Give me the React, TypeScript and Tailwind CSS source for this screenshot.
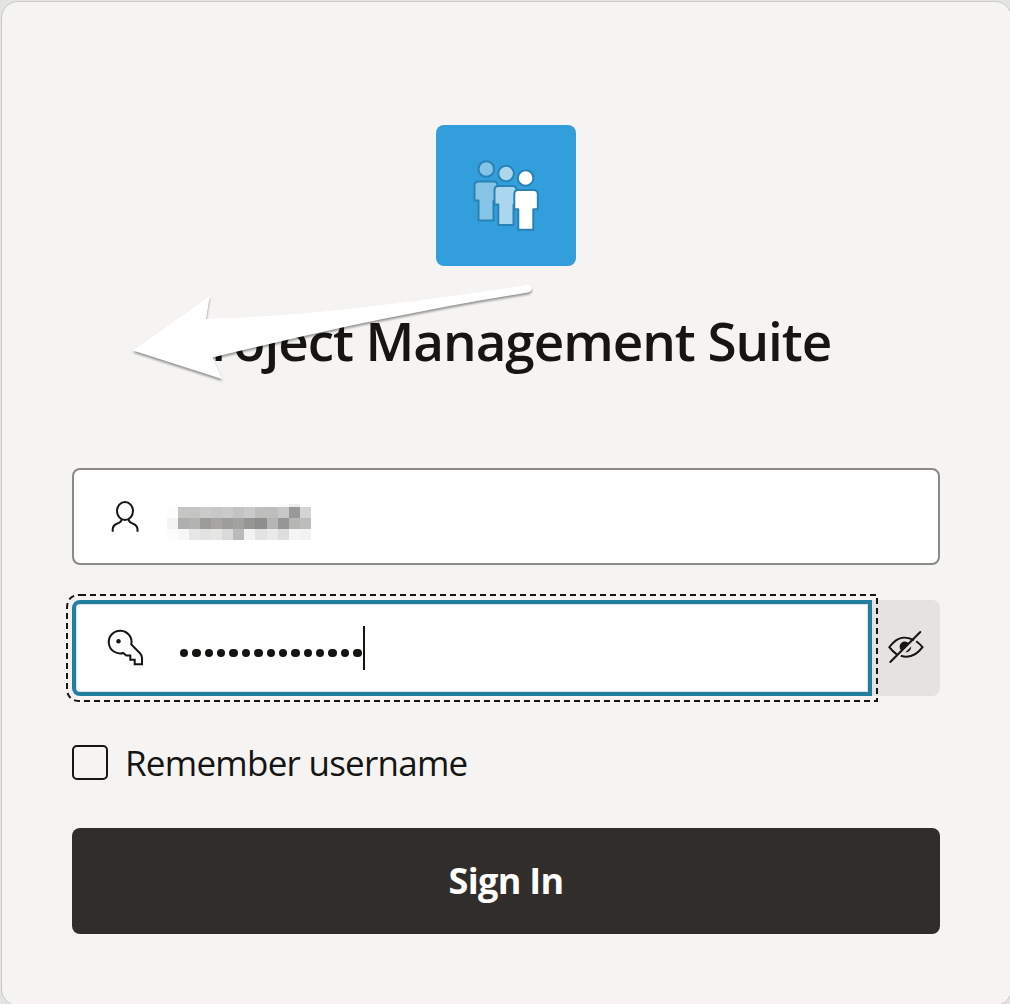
import React from "react";

const mosaic: string[][] = [
  ["#fdfdfd", "#c5c5c3", "#c4c4c2", "#cbcbc9", "#c7c7c7", "#cacac8", "#c3c3c3", "#cacaca", "#bebebc", "#bdbdbb", "#c8c8c8", "#999997", "#d4d4d4"],
  ["#f3f3f3", "#aeaeae", "#b3b3b1", "#9c9b99", "#a6a5a3", "#9f9d9c", "#a2a2a0", "#969694", "#8e8e8e", "#b5b5b5", "#969694", "#b6b6b4", "#bdbdbb"],
  ["#fcfcfc", "#f7f7f7", "#e6e6e6", "#e3e3e1", "#e6e6e4", "#dadad8", "#bababa", "#f2f2f2", "#e3e3e3", "#eaeaea", "#dddddd", "#f5f5f5", "#f3f3f3"],
];

function PeopleLogo() {
  return (
    <svg viewBox="430 120 150 150" className="ml-[-6px] mt-[-5px] h-[150px] w-[150px] shrink-0" stroke="#2782b5" strokeWidth="2" strokeLinejoin="round">
      <g fill="#85c3e7">
        <circle cx="486.3" cy="169" r="7.8" />
        <path d="M478.500 181.500h15q4 0 4 4v15.500h-4v19.500h-15v-20h-4V185.500q0-4 4-4Z" />
      </g>
      <g fill="#abd7ee">
        <circle cx="506.1" cy="173.500" r="7.800" />
        <path d="M498.500 186h14q4 0 4 4v15h-3v20h-15.200v-20.500h-3.800V190q0-4 4-4Z" />
      </g>
      <g fill="#fff">
        <circle cx="525.6" cy="178" r="7.800" />
        <path d="M518.300 190h15.200q4.300 0 4.300 4.300v15h-4.500v20.500h-15v-20.500h-4v-15q0-4.300 4-4.300Z" />
      </g>
    </svg>
  );
}

function PersonIcon() {
  return (
    <svg viewBox="109 499 32 34" className="mb-[2px] h-[34px] w-8" fill="none" stroke="#161513" strokeWidth="2">
      <ellipse cx="125" cy="511" rx="8" ry="9" />
      <path d="M121.700 519c0 3-2 3.700-4.700 4.700-3.200 1.200-4.300 2.800-4.300 5.800v2.200M128.500 519c0 3 2 3.700 4.600 4.700 3.200 1.200 4.400 2.800 4.400 5.800v2.200" />
    </svg>
  );
}

function KeyIcon() {
  return (
    <svg viewBox="106 628 40 40" className="h-10 w-10" fill="none" stroke="#161513" strokeWidth="2">
      <path d="M131.300 644.500A11.400 11.400 0 1 0 123.300 653l3 2.600h4v4.200h4.400v4.500h7.300v-6q0-3-2-5Z" />
      <circle cx="118.500" cy="641.2" r="2.200" fill="#161513" stroke="none" />
    </svg>
  );
}

function HiddenEyeIcon() {
  return (
    <svg viewBox="886 629 40 36" className="mb-[2px] h-9 w-10" fill="none" stroke="#161513" strokeWidth="2">
      <path d="M914 640.200c-7-4-14.600-3.200-20.200 2-1.800 1.700-3.300 3.200-4.500 5 2.300 3 4.700 5.300 7.500 7.200M916.200 641.200c2.300 1.600 4.400 3.500 6.300 6-6 8.200-13.500 11.200-21.700 8.600" />
      <path d="M901.100 650.300a5 5 0 0 1 7.500-7.300Z" fill="#161513" stroke="none" />
      <path d="M911.200 646.400q-.2 5.300-6 6.200Z" fill="#161513" stroke="none" />
      <path d="M890.300 662 920.300 632" strokeLinecap="round" />
    </svg>
  );
}

function Arrow() {
  return (
    <svg viewBox="120 275 430 120" className="pointer-events-none absolute left-[120px] top-[275px] h-[120px] w-[430px] drop-shadow-[0_2px_1px_rgba(0,0,0,0.4)]">
      <path d="M133 350.500 209.800 296l-3.800 23C315 316 424 300 527 285c6-1 7 6 1 7.500C424 309 312 333 212.500 357.500L222 379Z" fill="#fff" />
    </svg>
  );
}

export default function App() {
  return (
    <div className="relative h-[1004px] w-[1010px] overflow-hidden bg-[#e4e4e3] pl-px pt-px font-['Open_Sans',sans-serif] text-[#161513]">
      <main className="flex h-[1005px] w-[1011px] flex-col rounded-[17px] border border-[#c9c9c7] bg-[#f5f4f2] px-[70px] pt-[123px]">
        <div className="ml-[364px] flex h-[141px] w-[140px] overflow-hidden rounded-[8px] bg-[#329fdc]">
          <PeopleLogo />
        </div>
        <h1 className="mt-[39px] flex h-[72px] w-[868px] items-center justify-center whitespace-nowrap pr-px text-[53px] font-semibold tracking-[-1.050px]">
          Project Management Suite
        </h1>

        <div className="mt-[91px] flex h-[97px] w-[868px] items-center rounded-[8px] border-2 border-[#8b8a87] bg-white pl-[35px]">
          <PersonIcon />
          <div className="relative ml-[25.700px] mt-[14px] grid grid-cols-[repeat(13,11.1px)] grid-rows-[11px_11px_11px]">
            {mosaic.flat().map((color, i) => (
              <span key={i} style={{ backgroundColor: color }} />
            ))}
            <span className="absolute left-[111px] top-[-3px] h-[3px] w-[11px] bg-[#fafafa]" />
            <span className="absolute left-[122px] top-[-3px] h-[3px] w-[11px] bg-[#eeeeee]" />
          </div>
        </div>

        <div className="mt-[35px] flex h-24 w-[868px]">
          <div className="relative flex w-[800px] items-center rounded-l-[8px] border-4 border-[#227e9e] bg-white pl-[30px] shadow-[inset_0_0_0_1px_#d8e5ed]">
            <svg viewBox="66 594 812 108" className="pointer-events-none absolute left-[-10px] top-[-10px] h-[108px] w-[812px] max-w-none" fill="none" stroke="#161513" strokeWidth="2" strokeDasharray="6 4">
              <path d="M80 595H877V701H80Q67 701 67 688V608Q67 595 80 595Z" />
            </svg>
            <KeyIcon />
            <div className="ml-[33.800px] mt-[9.500px] flex gap-[4px]">
              {Array.from({ length: 15 }, (_, i) => (
                <span key={i} className="h-[8.400px] w-[8.400px] shrink-0 rounded-full bg-[#161513]" />
              ))}
            </div>
            <span className="ml-[1.200px] h-11 w-[2px] bg-[#161513]" />
          </div>
          <button aria-label="Show password" className="flex w-[68px] items-center justify-center rounded-r-[8px] bg-[#e4e3e1]">
            <HiddenEyeIcon />
          </button>
        </div>

        <label className="mt-[49px] flex h-[38px] items-center">
          <span className="mb-[3px] h-[35px] w-9 rounded-[5px] border-2 border-[#161513]" />
          <span className="mb-[2px] ml-[17px] whitespace-nowrap text-[35px] leading-[38px] tracking-[-0.75px]">Remember username</span>
        </label>
        <button className="mt-[45px] flex h-[106px] w-[868px] items-center justify-center rounded-[8px] bg-[#312d2a] text-[36px] font-bold tracking-[-0.700px] text-white">
          Sign In
        </button>
      </main>
      <Arrow />
    </div>
  );
}
